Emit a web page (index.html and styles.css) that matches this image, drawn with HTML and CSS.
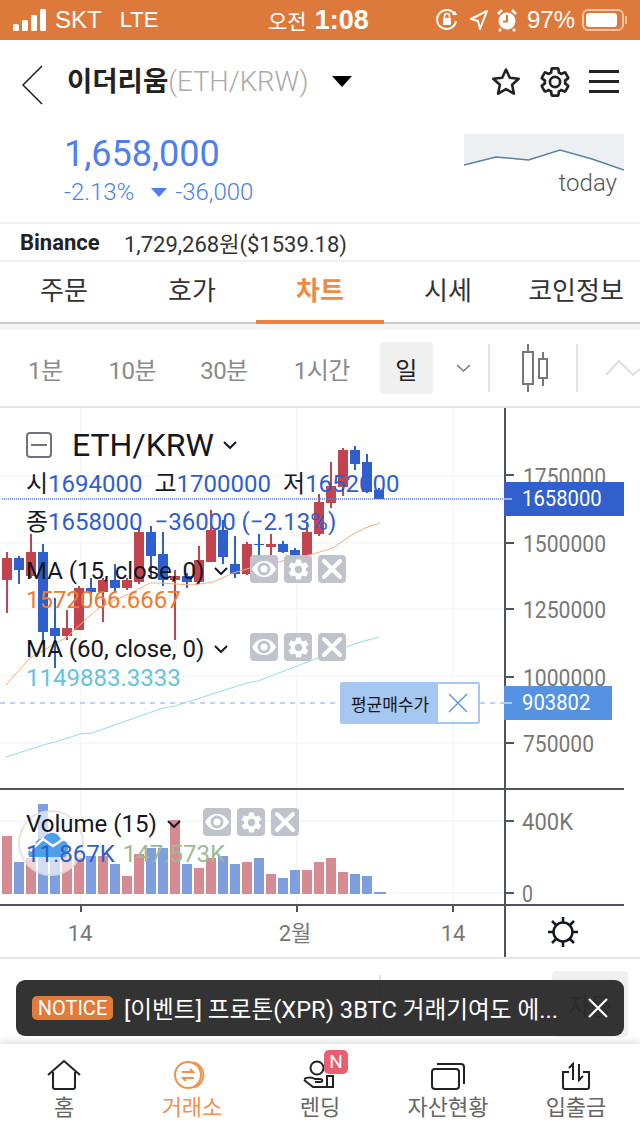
FILE: index.html
```html
<!DOCTYPE html>
<html lang="ko">
	<head>
		<meta charset="UTF-8" />
		<meta name="viewport" content="width=device-width, initial-scale=1.0" />
		<title>ETH/KRW Chart</title>
		<link rel="stylesheet" href="styles.css">
	</head>
	<body>
		<svg class="defs" width="0" height="0">
			<symbol id="eye" viewBox="0 0 28 28">
				<path d="M2 14c3-5.500 7-8 12-8s9 2.500 12 8c-3 5.500-7 8-12 8s-9-2.500-12-8z" fill="#fff" />
				<circle cx="14" cy="14" r="6.500" fill="#c0c3cc" />
				<circle cx="14" cy="14" r="3.500" fill="#fff" />
			</symbol>
			<symbol id="gear" viewBox="0 0 24 24">
				<path d="M19.14 12.94c.04-.3.06-.61.06-.94 0-.32-.02-.64-.07-.94l2.03-1.58a.49.49 0 0 0 .12-.61l-1.92-3.32a.488.488 0 0 0-.59-.22l-2.39.96c-.5-.38-1.03-.7-1.62-.94l-.36-2.54a.484.484 0 0 0-.48-.41h-3.84c-.24 0-.43.17-.47.41l-.36 2.54c-.59.24-1.13.57-1.62.94l-2.39-.96c-.22-.08-.47 0-.59.22L2.74 8.87c-.12.21-.08.47.12.61l2.03 1.58c-.05.3-.09.63-.09.94s.02.64.07.94l-2.03 1.58a.49.49 0 0 0-.12.61l1.92 3.32c.12.22.37.29.59.22l2.39-.96c.5.38 1.03.7 1.62.94l.36 2.54c.05.24.24.41.48.41h3.84c.24 0 .44-.17.47-.41l.36-2.54c.59-.24 1.13-.56 1.62-.94l2.39.96c.22.08.47 0 .59-.22l1.92-3.32c.12-.22.07-.47-.12-.61l-2.01-1.58zM12 15.6c-1.98 0-3.6-1.62-3.6-3.6s1.62-3.6 3.6-3.6 3.6 1.62 3.6 3.6-1.62 3.6-3.6 3.6z" />
			</symbol>
			<symbol id="cross" viewBox="0 0 28 28">
				<path d="M6 6l16 16M22 6L6 22" stroke="#fff" stroke-width="4" stroke-linecap="round" fill="none" />
			</symbol>
			<symbol id="chev" viewBox="0 0 14 8">
				<path d="M1 1l6 6 6-6" stroke="#131722" stroke-width="2" fill="none" />
			</symbol>
		</svg>

		<div class="app">
			<div class="status-bar">
				<div class="status-left">
					<svg width="33" height="22" viewBox="0 0 33 22">
						<rect x="0" y="15" width="6" height="7" rx="1.500" fill="#fff" />
						<rect x="9" y="11" width="6" height="11" rx="1.500" fill="#fff" />
						<rect x="18" y="6" width="6" height="16" rx="1.500" fill="#fff" />
						<rect x="27" y="0" width="6" height="22" rx="1.500" fill="#fff" />
					</svg>
					<span class="carrier">SKT</span>
					<span class="network">LTE</span>
				</div>
				<div class="status-time"><span class="ampm">오전</span><span class="clock">1:08</span></div>
				<div class="status-right">
					<svg width="22" height="24" viewBox="0 0 22 24">
						<path d="M19 7a9.500 9.500 0 1 0 1 6" stroke="#fff" stroke-width="2" fill="none" />
						<path d="M16 7h5l-2-4z" fill="#fff" />
						<rect x="7" y="10" width="8" height="7" rx="1" fill="#fff" />
						<path d="M8.500 10V8a2.500 2.500 0 0 1 5 0v2" stroke="#fff" stroke-width="1.500" fill="none" />
					</svg>
					<svg class="loc" width="18" height="20" viewBox="0 0 18 20">
						<path d="M17 1L1 9l7 2 2 8z" stroke="#fff" stroke-width="2" fill="none" stroke-linejoin="round" />
					</svg>
					<svg class="alarm" width="20" height="24" viewBox="0 0 20 24">
						<circle cx="10" cy="13" r="8.500" fill="#fff" />
						<path d="M10 7v6.500h-4" stroke="#dd7a3b" stroke-width="2" fill="none" />
						<path d="M1 6l4-4M19 6l-4-4M4 21l-2 2M16 21l2 2" stroke="#fff" stroke-width="2.500" />
					</svg>
					<span class="battery-pct">97%</span>
					<div class="battery"><div class="battery-fill"></div></div>
					<span class="battery-nub"></span>
				</div>
			</div>

			<div class="nav-head">
				<svg class="back" width="22" height="40" viewBox="0 0 22 40">
					<path d="M21 1L2 20l19 19" stroke="#222" stroke-width="1.500" fill="none" />
				</svg>
				<span class="coin-name">이더리움</span><span class="coin-pair">(ETH/KRW)</span>
				<span class="coin-caret"></span>
				<div class="head-icons">
					<svg width="30" height="30" viewBox="0 0 30 30">
						<path d="M15 2.500l3.800 8.200 8.900 1-6.600 6.100 1.800 8.800-7.900-4.500-7.900 4.500 1.800-8.800-6.600-6.100 8.900-1z" stroke="#222" stroke-width="2.600" stroke-linejoin="round" fill="none" />
					</svg>
					<svg width="34" height="34" viewBox="0 0 24 24">
						<use href="#gear" class="gear-outline" />
					</svg>
					<div class="burger"><i></i><i></i><i></i></div>
				</div>
			</div>

			<div class="price-box">
				<div class="price-left">
					<div class="price-now">1,658,000</div>
					<div class="price-change">
						<span>-2.13%</span>
						<span class="down-arrow"></span>
						<span>-36,000</span>
					</div>
				</div>
				<div class="spark">
					<svg width="160" height="37" viewBox="464 134 160 37">
						<path d="M464 134H624V170L592 159 560 150 528.500 160 496 157 464 165z" fill="#ecf0f3" />
						<path d="M464 165l32-8 32.500 3 31.500-10 32 9 32 11" stroke="#55849f" stroke-width="1.500" fill="none" />
					</svg>
					<div class="spark-label">today</div>
				</div>
			</div>

			<div class="binance-row">
				<b>Binance</b>
				<span>1,729,268원($1539.18)</span>
			</div>

			<div class="tabs">
				<div class="tab">주문</div>
				<div class="tab">호가</div>
				<div class="tab active">차트</div>
				<div class="tab">시세</div>
				<div class="tab">코인정보</div>
			</div>

			<div class="toolbar">
				<span class="iv iv-1">1분</span>
				<span class="iv iv-2">10분</span>
				<span class="iv iv-3">30분</span>
				<span class="iv iv-4">1시간</span>
				<span class="iv-day">일</span>
				<svg class="iv-chev" width="15" height="8" viewBox="0 0 15 8">
					<path d="M1 1l6.500 6L14 1" stroke="#777" stroke-width="1.500" fill="none" />
				</svg>
				<span class="tool-sep sep-1"></span>
				<svg class="candle-ico" width="27" height="48" viewBox="0 0 27 48">
					<path d="M7 0v48M22 8v34" stroke="#777" stroke-width="2" />
					<rect x="2" y="8" width="10" height="32" fill="#fff" stroke="#777" stroke-width="2" />
					<rect x="18" y="15" width="8" height="19" fill="#fff" stroke="#777" stroke-width="2" />
				</svg>
				<span class="tool-sep sep-2"></span>
				<svg class="wave-ico" width="34" height="20" viewBox="0 0 34 20">
					<path d="M0 17L13 3l14 14 7-6" stroke="#ddd" stroke-width="2" fill="none" />
				</svg>
			</div>

			<div class="chart">
				<svg class="plot" width="640" height="549" viewBox="0 408 640 549">
					<path class="grid" d="M0 476H505M0 543H505M0 609H505M0 676H505M0 743H505M0 821H505M0 893H505M81 408V905M297 408V905M453 408V905" />

					<path class="wick-red" d="M7 552v61M31 534v44M67 610v30M79 586v44M103 578v44M127 578v12M139 527v57M175 570v70M199 546v38M211 510v52M247 542v33M271 534v23M307 522v34M319 494v42M331 462v46M343 448v48" />
					<path class="wick-blue" d="M19 556v28M43 544v96M55 598v70M91 578v24M115 564v28M151 526v52M163 532v54M187 573v15M223 520v44M235 536v42M259 534v23M283 541v12M295 548v8M355 446v24M367 454v39M379 488v11" />
					<path class="body-red" d="M2 558h10v22H2zM26 552h10v24H26zM62 628h10v8H62zM74 588h10v42H74zM98 580h10v12H98zM122 580h10v8h-10zM134 532h10v50h-10zM170 576h10v4h-10zM194 560h10v22h-10zM206 530h10v32h-10zM242 544h10v30h-10zM266 544h10v3h-10zM302 532h10v23h-10zM314 502h10v32h-10zM326 486h10v17h-10zM338 450h10v37h-10z" />
					<path class="body-blue" d="M14 558h10v12H14zM38 552h10v80H38zM50 628h10v8H50zM86 588h10v4H86zM110 580h10v8h-10zM146 532h10v24h-10zM158 554h10v26h-10zM182 576h10v6h-10zM218 530h10v27h-10zM230 564h10v10h-10zM254 544h10v1h-10zM278 544h10v8h-10zM290 550h10v5h-10zM350 450h10v14h-10zM362 462h10v30h-10zM374 490h10v9h-10z" />

					<path class="ma-orange" d="M6 685L30 658 67 637 83 622 100 607 133 592 150 583 160 583 193 585 213 582 233 573 250 568 287 560 313 554 333 548 350 536 365 528 380 523" />
					<path class="ma-teal" d="M6 757L43 745 55 742 80 734 92 733 163 708 175 706 247 683 258 681 357 643 379 637" />

					<path class="vol-red" d="M2 836h10v58H2zM26 858h10v36H26zM62 855h10v39H62zM74 858h10v36H74zM98 856h10v38H98zM122 876h10v18h-10zM134 854h10v40h-10zM170 820h10v74h-10zM194 868h10v26h-10zM206 858h10v36h-10zM242 862h10v32h-10zM266 874h10v20h-10zM302 870h10v24h-10zM314 862h10v32h-10zM326 858h10v36h-10zM338 872h10v22h-10z" />
					<path class="vol-blue" d="M14 862h10v32H14zM38 804h10v90H38zM50 855h10v39H50zM86 856h10v38H86zM110 864h10v30h-10zM146 848h10v46h-10zM158 848h10v46h-10zM182 864h10v30h-10zM218 856h10v38h-10zM230 864h10v30h-10zM254 858h10v36h-10zM278 878h10v16h-10zM290 870h10v24h-10zM350 874h10v20h-10zM362 876h10v18h-10zM374 892h12v2h-12z" />

					<path class="price-dot" d="M2 499H505" />
					<path class="price-dash" d="M0 703H340M480 703H505" />

					<path class="axis" d="M505 408V957M0 789H624M0 905H624M505 475h9M505 543h9M505 609h9M505 677h9M505 743h9M505 821h9M505 893h9M81 905v7M297 905v7M453 905v7" />

					<text class="ax-label" x="523" y="485" textLength="83" lengthAdjust="spacingAndGlyphs">1750000</text>
					<text class="ax-label" x="523" y="552" textLength="83" lengthAdjust="spacingAndGlyphs">1500000</text>
					<text class="ax-label" x="523" y="618" textLength="83" lengthAdjust="spacingAndGlyphs">1250000</text>
					<text class="ax-label" x="523" y="686" textLength="83" lengthAdjust="spacingAndGlyphs">1000000</text>
					<text class="ax-label" x="523" y="752" textLength="71" lengthAdjust="spacingAndGlyphs">750000</text>
					<text class="ax-label" x="522" y="830" textLength="51" lengthAdjust="spacingAndGlyphs">400K</text>
					<text class="ax-label" x="522" y="902" textLength="11" lengthAdjust="spacingAndGlyphs">0</text>
					<text class="ax-time" x="80" y="941">14</text>
					<text class="ax-time" x="295" y="941">2월</text>
					<text class="ax-time" x="453" y="941">14</text>

					<g stroke="#131722" stroke-width="2.500" fill="none">
						<circle cx="563" cy="932" r="9.500" />
						<path d="M563 917v5M563 942v5M548 932h5M573 932h5M552 921l4 4M574 921l-4 4M552 943l4-4M574 943l-4-4" />
					</g>
				</svg>

				<div class="bubble">
					<svg width="42" height="26" viewBox="0 0 42 26">
						<path d="M2 25c-2-6 1-11 6-12 1-4 4-7 8-6 2-4 7-7 11-6 4 1 6 4 7 7 3 0 7 2 7 7 0 4-1 8-3 10z" fill="#4e9fe8" />
						<path d="M3 19L16 7l10 7 12-8" stroke="#fff" stroke-width="2.500" fill="none" />
					</svg>
				</div>

				<div class="legend legend-main">
					<div class="lg-title">
						<span class="minus-box"></span>
						<span class="lg-symbol">ETH/KRW</span>
						<svg class="lg-chev" width="14" height="8"><use href="#chev" /></svg>
					</div>
					<div class="lg-ohlc">
						<span>시<em>1694000</em></span>
						<span>고<em>1700000</em></span>
						<span>저<em>1652000</em></span>
					</div>
					<div class="lg-close">종<em>1658000</em> <em class="lg-diff">−36000 (−2.13%)</em></div>
					<div class="lg-study">
						<span class="study-name">MA (15, close, 0)<svg class="lg-chev" width="14" height="8"><use href="#chev" /></svg></span>
						<span class="btns">
							<span class="btn"><svg width="28" height="28"><use href="#eye" /></svg></span>
							<span class="btn"><svg width="25" height="25" fill="#fff"><use href="#gear" /></svg></span>
							<span class="btn"><svg width="28" height="28"><use href="#cross" /></svg></span>
						</span>
					</div>
					<div class="lg-val val-orange">1572066.6667</div>
					<div class="lg-study study-2">
						<span class="study-name">MA (60, close, 0)<svg class="lg-chev" width="14" height="8"><use href="#chev" /></svg></span>
						<span class="btns">
							<span class="btn"><svg width="28" height="28"><use href="#eye" /></svg></span>
							<span class="btn"><svg width="25" height="25" fill="#fff"><use href="#gear" /></svg></span>
							<span class="btn"><svg width="28" height="28"><use href="#cross" /></svg></span>
						</span>
					</div>
					<div class="lg-val val-teal">1149883.3333</div>
				</div>

				<div class="legend legend-volume">
					<div class="lg-study">
						<span class="study-name">Volume (15)<svg class="lg-chev" width="14" height="8"><use href="#chev" /></svg></span>
						<span class="btns">
							<span class="btn"><svg width="28" height="28"><use href="#eye" /></svg></span>
							<span class="btn"><svg width="25" height="25" fill="#fff"><use href="#gear" /></svg></span>
							<span class="btn"><svg width="28" height="28"><use href="#cross" /></svg></span>
						</span>
					</div>
					<div class="lg-val"><span class="val-blue">11.867K</span> <span class="val-green">147.573K</span></div>
				</div>

				<div class="price-tag tag-now"><span>1658000</span></div>
				<div class="price-tag tag-avg"><span>903802</span></div>
				<div class="avg-box">
					<span class="avg-label">평균매수가</span>
					<span class="avg-close">
						<svg width="20" height="20" viewBox="0 0 20 20">
							<path d="M1 1l18 18M19 1L1 19" stroke="#5593e2" stroke-width="1.300" />
						</svg>
					</span>
				</div>
			</div>

			<div class="under-row">
				<span class="under-sep"></span>
				<span class="auto-btn">자동</span>
			</div>

			<div class="bottom-nav">
				<div class="nav-item">
					<svg width="34" height="30" viewBox="0 0 34 30">
						<path d="M1 15L17 1l16 14M6 12v15a2 2 0 0 0 2 2h18a2 2 0 0 0 2-2V12" stroke="#222" stroke-width="2" fill="none" />
					</svg>
					<span>홈</span>
				</div>
				<div class="nav-item on">
					<svg width="36" height="30" viewBox="0 0 36 30">
						<circle cx="14" cy="15" r="13" fill="#fff" stroke="#f0914d" stroke-width="2" />
						<path d="M20 2.500a13 13 0 0 1 0 25" stroke="#f0914d" stroke-width="2" fill="none" />
						<path d="M8 12h11l-3-3M20 18H9l3 3" stroke="#f0914d" stroke-width="2" fill="none" />
					</svg>
					<span>거래소</span>
				</div>
				<div class="nav-item">
					<svg width="34" height="30" viewBox="0 0 34 30">
						<circle cx="14" cy="8" r="6.500" stroke="#222" stroke-width="2" fill="none" />
						<path d="M1 19c4-2 8-2 11 0h5c3 0 3 3 0 3h-5M1 20l9 7h14M24 16h6v11h-6z" stroke="#222" stroke-width="2" fill="none" />
					</svg>
					<b class="badge-n">N</b>
					<span>렌딩</span>
				</div>
				<div class="nav-item">
					<svg width="34" height="30" viewBox="0 0 34 30">
						<rect x="1" y="9" width="27" height="20" rx="3" stroke="#222" stroke-width="2" fill="none" />
						<path d="M6 4h24a3 3 0 0 1 3 3v17" stroke="#222" stroke-width="2" fill="none" />
					</svg>
					<span>자산현황</span>
				</div>
				<div class="nav-item">
					<svg width="30" height="30" viewBox="0 0 30 30">
						<path d="M8 12H2v15a2 2 0 0 0 2 2h22a2 2 0 0 0 2-2V12h-6" stroke="#222" stroke-width="2" fill="none" />
						<path d="M12 20V4L8 8M18 4v16l4-4" stroke="#222" stroke-width="2" fill="none" />
					</svg>
					<span>입출금</span>
				</div>
			</div>

			<div class="toast">
				<span class="toast-badge">NOTICE</span>
				<span class="toast-text">[이벤트] 프로톤(XPR) 3BTC 거래기여도 에...</span>
				<svg width="20" height="20" viewBox="0 0 20 20">
					<path d="M1 1l18 18M19 1L1 19" stroke="#fff" stroke-width="2.200" />
				</svg>
			</div>
		</div>
	</body>
</html>
```

FILE: styles.css
```css
* {
	box-sizing: border-box;
}
body {
	margin: 0;
	background: #fff;
	font-family: Roboto, "Noto Sans CJK KR", sans-serif;
	color: #222;
}
.defs {
	position: absolute;
}
.app {
	position: relative;
	width: 640px;
	height: 1136px;
	overflow: hidden;
	display: flex;
	flex-direction: column;
}

/* status bar */
.status-bar {
	height: 40px;
	flex: none;
	background: #dd7a3b;
	color: #fff;
	display: flex;
	align-items: center;
	padding: 0 11px 0 13px;
	font-size: 24px;
	font-family: "Liberation Sans", "Noto Sans CJK KR", sans-serif;
}
.status-left {
	display: flex;
	align-items: center;
	width: 255px;
}
.carrier {
	margin-left: 9px;
}
.network {
	margin-left: 18px;
	font-size: 22px;
}
.status-time {
	width: 168px;
	display: flex;
	align-items: center;
	font-size: 24px;
}
.ampm {
	font-size: 21px;
}
.clock {
	margin-left: 8px;
	font-weight: bold;
	font-size: 27px;
}
.status-right {
	flex: 1;
	display: flex;
	align-items: center;
}
.loc {
	margin-left: 12px;
}
.alarm {
	margin-left: 9px;
}
.battery-pct {
	margin-left: 10px;
	width: 55px;
}
.battery {
	width: 42px;
	height: 22px;
	border: 2px solid #f0c3a4;
	border-radius: 6px;
	padding: 2px;
}
.battery-fill {
	width: 92%;
	height: 100%;
	background: #fff;
	border-radius: 3px;
}
.battery-nub {
	width: 2px;
	height: 8px;
	margin-left: 1px;
	background: #f0c3a4;
}

/* coin header */
.nav-head {
	height: 86px;
	flex: none;
	display: flex;
	align-items: center;
	padding: 0 21px 3px 21px;
}
.back {
	margin-right: 24px;
	margin-top: 6px;
}
.coin-name {
	font-size: 27.500px;
	font-weight: 700;
	line-height: 36px;
}
.coin-pair {
	font-size: 27.500px;
	font-weight: 300;
	color: #aaa;
	line-height: 36px;
}
.coin-caret {
	margin-left: 24px;
	border-left: 10px solid transparent;
	border-right: 10px solid transparent;
	border-top: 11px solid #000;
}
.head-icons {
	margin-left: auto;
	display: flex;
	align-items: center;
	gap: 17px;
}
.gear-outline {
	fill: none;
	stroke: #222;
	stroke-width: 1.900;
}
.burger {
	width: 30px;
	display: flex;
	flex-direction: column;
	gap: 7px;
}
.burger i {
	display: block;
	height: 3px;
	background: #222;
}

/* price */
.price-box {
	height: 96px;
	flex: none;
	display: flex;
	justify-content: space-between;
	padding: 8px 16px 0 64px;
}
.price-now {
	font-size: 36px;
	line-height: 40px;
	color: #4d7fef;
}
.price-change {
	display: flex;
	align-items: center;
	gap: 17px;
	font-size: 24px;
	font-weight: 300;
	line-height: 30px;
	margin-top: 3px;
	color: #4d7fef;
}
.price-change span:last-child {
	margin-left: -9px;
}
.down-arrow {
	border-left: 8px solid transparent;
	border-right: 8px solid transparent;
	border-top: 9px solid #4d7fef;
}
.spark {
	width: 160px;
	font-size: 0;
}
.spark-label {
	font-size: 24px;
	font-weight: 300;
	color: #555;
	text-align: right;
	padding-right: 7px;
	line-height: 28px;
	margin-top: -2px;
}

/* binance */
.binance-row {
	height: 40px;
	flex: none;
	border-top: 2px solid #f0f0f0;
	border-bottom: 2px solid #f0f0f0;
	display: flex;
	align-items: center;
	padding-left: 20px;
	font-size: 22px;
	color: #333;
}
.binance-row b {
	width: 104px;
	color: #222;
}

/* tabs */
.tabs {
	height: 62px;
	flex: none;
	display: flex;
	border-bottom: 2px solid #ccc;
	background: #fff;
}
.tab {
	flex: 1;
	display: flex;
	align-items: center;
	justify-content: center;
	font-size: 26px;
	color: #333;
	margin-bottom: -2px;
	padding-bottom: 10px;
}
.tab.active {
	color: #ef8a45;
	font-weight: 700;
	border-bottom: 4px solid #ef8040;
	padding-bottom: 6px;
}

/* interval toolbar */
.toolbar {
	height: 84px;
	flex: none;
	position: relative;
	display: flex;
	align-items: center;
	border-top: 6px solid #f5f5f5;
	border-bottom: 2px solid #e5e5e5;
	padding-left: 28px;
	font-size: 24px;
	color: #8a8a8a;
	white-space: nowrap;
}
.toolbar > * {
	flex: none;
}
.iv {
	letter-spacing: -0.5px;
}
.iv-2 {
	margin-left: 46px;
}
.iv-3 {
	margin-left: 44px;
}
.iv-4 {
	margin-left: 46px;
}
.iv-day {
	width: 53px;
	height: 52px;
	margin-left: 30px;
	display: flex;
	align-items: center;
	justify-content: center;
	background: #f0f0f0;
	border-radius: 4px;
	color: #222;
}
.iv-chev {
	margin-left: 23px;
}
.tool-sep {
	width: 2px;
	height: 48px;
	background: #e3e3e3;
}
.sep-1 {
	margin-left: 17px;
}
.candle-ico {
	margin-left: 31px;
}
.sep-2 {
	margin-left: 28px;
}
.wave-ico {
	margin-left: 28px;
}

/* chart */
.chart {
	position: relative;
	height: 549px;
	flex: none;
}
.plot {
	position: absolute;
	left: 0;
	top: 0;
}
.grid {
	stroke: #f7f8fa;
	stroke-width: 2;
	fill: none;
}
.wick-red,
.wick-blue {
	stroke-width: 2;
	fill: none;
}
.wick-red {
	stroke: #c1444f;
}
.wick-blue {
	stroke: #2f5fcd;
}
.body-red {
	fill: #c1444f;
}
.body-blue {
	fill: #2f5fcd;
}
.vol-red {
	fill: #d68a92;
}
.vol-blue {
	fill: #7f9ede;
}
.ma-orange {
	stroke: #f4b07c;
	stroke-width: 1;
	fill: none;
}
.ma-teal {
	stroke: #96dcec;
	stroke-width: 1;
	fill: none;
}
.price-dot {
	stroke: #5f7fd8;
	stroke-width: 1.500;
	stroke-dasharray: 1 1;
	fill: none;
}
.price-dash {
	stroke: #a6c7f0;
	stroke-width: 1.500;
	stroke-dasharray: 5 5;
	fill: none;
}
.axis {
	stroke: #50535e;
	stroke-width: 2;
	fill: none;
}
.ax-label,
.ax-time {
	font-size: 24px;
	fill: #777;
}
.ax-time {
	text-anchor: middle;
	font-size: 22px;
}
.bubble {
	position: absolute;
	left: 18px;
	top: 402px;
	width: 66px;
	height: 66px;
	border-radius: 50%;
	border: 2px solid rgba(210, 210, 210, 0.6);
	background: rgba(255, 255, 255, 0.65);
	padding: 20px 0 0 7px;
}
.bubble svg {
	display: block;
}
.legend {
	position: absolute;
	left: 26px;
	font-size: 24px;
	color: #131722;
}
.legend em {
	font-style: normal;
	color: #2f5fcd;
}
.legend-main {
	top: 22px;
	width: 320px;
}
.legend-volume {
	top: 400px;
	width: 273px;
}
.lg-title {
	height: 30px;
	display: flex;
	align-items: center;
}
.minus-box {
	width: 26px;
	height: 26px;
	border: 2px solid #70747f;
	border-radius: 4px;
	position: relative;
}
.minus-box::after {
	content: "";
	position: absolute;
	left: 3px;
	right: 3px;
	top: 10px;
	height: 2px;
	background: #70747f;
}
.lg-symbol {
	margin-left: 20px;
	font-size: 32px;
	line-height: 30px;
}
.lg-title .lg-chev {
	margin-left: 9px;
}
.lg-ohlc {
	height: 30px;
	margin-top: 9px;
	display: flex;
	gap: 12px;
	line-height: 30px;
	white-space: nowrap;
}
.lg-close {
	height: 30px;
	margin-top: 8px;
	line-height: 30px;
	white-space: nowrap;
}
.lg-diff {
	margin-left: 6px;
}
.lg-study {
	height: 28px;
	margin-top: 18px;
	display: flex;
	justify-content: space-between;
	align-items: center;
	white-space: nowrap;
}
.legend-volume .lg-study {
	margin-top: 0;
}
.study-2 {
	margin-top: 18px;
}
.study-name {
	display: flex;
	align-items: center;
	padding-top: 3px;
}
.study-name .lg-chev {
	margin-left: 10px;
}
.btns {
	display: flex;
	gap: 6px;
}
.btn {
	width: 28px;
	height: 28px;
	background: #c0c3cc;
	border-radius: 4px;
	display: flex;
	align-items: center;
	justify-content: center;
}
.lg-val {
	height: 30px;
	margin-top: 2px;
	line-height: 30px;
	white-space: nowrap;
}
.legend-volume .lg-val {
	padding-top: 1px;
}
.val-orange {
	color: #f57a2b;
}
.val-teal {
	color: #63c5da;
}
.val-blue {
	color: #2f5fcd;
}
.val-green {
	margin-left: 2px;
	color: #9dbb91;
}
.price-tag {
	position: absolute;
	left: 504px;
	height: 34px;
	color: #fff;
	font-size: 22px;
	line-height: 34px;
	padding-left: 18px;
}
.price-tag span {
	display: inline-block;
	transform: scaleX(0.92);
	transform-origin: left center;
}
.price-tag::before {
	content: "";
	position: absolute;
	left: 0;
	top: 16px;
	width: 8px;
	height: 2px;
	background: rgba(255, 255, 255, 0.5);
}
.tag-now {
	top: 74px;
	width: 120px;
	background: #315fcc;
}
.tag-avg {
	top: 278px;
	width: 108px;
	background: #5593e2;
}
.avg-box {
	position: absolute;
	left: 340px;
	top: 274px;
	width: 140px;
	height: 42px;
	display: flex;
	border-radius: 2px;
	background: #a6c7f0;
	padding: 2px;
}
.avg-label {
	width: 96px;
	display: flex;
	align-items: center;
	justify-content: center;
	font-size: 17px;
	color: #131722;
}
.avg-close {
	flex: 1;
	background: #fff;
	display: flex;
	align-items: center;
	justify-content: center;
}

/* row hidden behind the notice */
.under-row {
	flex: 1;
	position: relative;
	display: flex;
	align-items: center;
	justify-content: flex-end;
	border-top: 2px solid #e5e5e5;
	padding: 5px 12px 0 0;
}
.under-sep {
	width: 2px;
	height: 58px;
	background: #e3e3e3;
	margin-right: 171px;
}
.auto-btn {
	width: 76px;
	height: 66px;
	background: #f0f0f0;
	border-radius: 4px;
	display: flex;
	align-items: center;
	justify-content: center;
	font-size: 24px;
	color: #111;
}

/* bottom nav */
.bottom-nav {
	height: 92px;
	flex: none;
	display: flex;
	background: #fff;
	box-shadow: 0 -3px 6px rgba(0, 0, 0, 0.12);
	position: relative;
}
.nav-item {
	position: relative;
	flex: 1;
	display: flex;
	flex-direction: column;
	align-items: center;
	padding-top: 16px;
	font-size: 22px;
	color: #666;
	line-height: 32px;
}
.nav-item span {
	margin-top: 2px;
}
.nav-item.on {
	color: #f0914d;
}
.badge-n {
	position: absolute;
	left: 68px;
	top: 6px;
	width: 24px;
	height: 24px;
	background: #e8606f;
	border-radius: 5px;
	color: #fff;
	font-weight: 400;
	font-size: 19px;
	line-height: 24px;
	text-align: center;
}

/* notice */
.toast {
	position: absolute;
	left: 16px;
	top: 980px;
	width: 608px;
	height: 56px;
	background: rgba(44, 44, 44, 0.97);
	border-radius: 9px;
	display: flex;
	align-items: center;
	padding: 0 16px;
	color: #fff;
}
.toast-badge {
	flex: none;
	width: 81px;
	height: 24px;
	background: #e07b3a;
	border-radius: 5px;
	font-size: 20px;
	line-height: 24px;
	text-align: center;
}
.toast-text {
	flex: 1;
	margin-left: 11px;
	font-size: 23.700px;
	white-space: nowrap;
}
```
